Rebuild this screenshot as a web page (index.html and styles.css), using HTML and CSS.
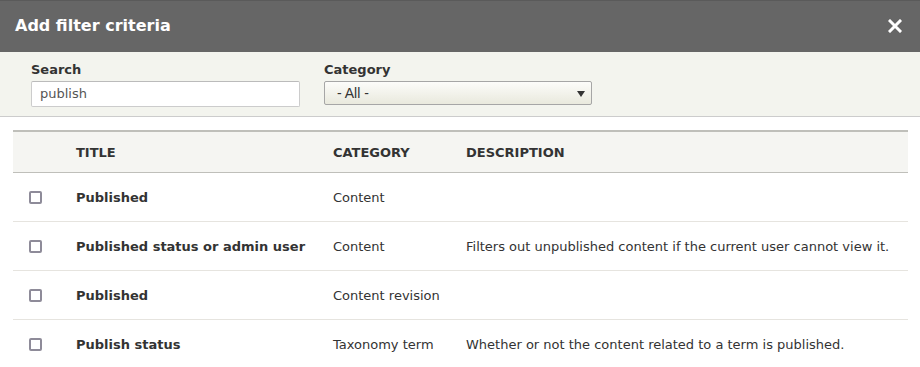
FILE: index.html
```html
<!DOCTYPE html>
<html lang="en">
<head>
<meta charset="utf-8">
<title>Add filter criteria</title>
<link rel="stylesheet" href="styles.css">
</head>
<body>
<div class="dialog">
  <div class="titlebar">
    <span class="title">Add filter criteria</span>
    <button class="close" aria-label="Close">
      <svg width="14" height="14" viewBox="0 0 14 14"><path d="M2 2 L12 12 M12 2 L2 12" stroke="#fff" stroke-width="3" stroke-linecap="square"/></svg>
    </button>
  </div>
  <div class="filters">
    <div class="field search">
      <label class="label">Search</label>
      <div class="input">publish</div>
    </div>
    <div class="field category">
      <label class="label">Category</label>
      <div class="select"><span>- All -</span><span class="arrow"></span></div>
    </div>
  </div>
  <div class="content">
    <table class="grid">
      <colgroup><col class="c-check"><col class="c-title"><col class="c-cat"><col></colgroup>
      <thead>
        <tr><th></th><th>Title</th><th>Category</th><th>Description</th></tr>
      </thead>
      <tbody>
        <tr><td class="chk"><span class="box"></span></td><td class="name">Published</td><td>Content</td><td></td></tr>
        <tr><td class="chk"><span class="box"></span></td><td class="name">Published status or admin user</td><td>Content</td><td>Filters out unpublished content if the current user cannot view it.</td></tr>
        <tr><td class="chk"><span class="box"></span></td><td class="name">Published</td><td>Content revision</td><td></td></tr>
        <tr><td class="chk"><span class="box"></span></td><td class="name">Publish status</td><td>Taxonomy term</td><td>Whether or not the content related to a term is published.</td></tr>
      </tbody>
    </table>
  </div>
</div>
</body>
</html>
```
FILE: styles.css
```css
html, body {
  margin: 0;
  padding: 0;
  background: #fff;
}
body {
  font-family: "DejaVu Sans", "Liberation Sans", sans-serif;
  font-size: 13px;
  color: #333;
}
.dialog {
  width: 920px;
  height: 367px;
  overflow: hidden;
  background: #fff;
}
.titlebar {
  height: 51px;
  background: #666;
  border-top: 1px solid #5a5a5a;
  display: flex;
  align-items: center;
  justify-content: space-between;
  padding: 0 18px 0 15px;
}
.title {
  color: #fff;
  font-weight: bold;
  font-size: 16px;
  margin-top: -2px;
}
.close {
  border: 0;
  background: none;
  padding: 0;
  width: 14px;
  height: 14px;
  display: flex;
  margin-top: -1px;
}
.filters {
  background: #f3f4ee;
  border-bottom: 1px solid #ccc;
  height: 65px;
  display: flex;
  gap: 24px;
  padding-left: 31px;
  box-sizing: border-box;
  padding-top: 9px;
}
.field {
  display: flex;
  flex-direction: column;
}
.label {
  font-weight: bold;
  line-height: 18px;
  margin-bottom: 2px;
}
.input {
  width: 269px;
  height: 26px;
  box-sizing: border-box;
  border: 1px solid #ccc;
  border-top-color: #bbb;
  border-radius: 2px;
  background: #fff;
  padding: 0 8px;
  line-height: 24px;
  color: #555;
}
.select {
  width: 268px;
  height: 24px;
  box-sizing: border-box;
  border: 1px solid #a6a6a6;
  border-radius: 2px;
  background: linear-gradient(#fcfcfa, #e9e9dd);
  display: flex;
  align-items: center;
  justify-content: space-between;
  padding: 0 6px 0 12px;
  font-family: "Liberation Sans", Arial, sans-serif;
  font-size: 14px;
  color: #333;
}
.arrow {
  width: 0;
  height: 0;
  border-left: 4px solid transparent;
  border-right: 4px solid transparent;
  border-top: 6px solid #333;
  margin-top: 2px;
}
.content {
  padding: 13px 12px 0 13px;
}
.grid {
  width: 895px;
  border-collapse: collapse;
  table-layout: fixed;
}
.c-check { width: 63px; }
.c-title { width: 257px; }
.c-cat { width: 133px; }
.grid thead th {
  background: #f5f5f2;
  border-top: 2px solid #bfbfba;
  border-bottom: 1px solid #bfbfba;
  height: 40px;
  padding: 0;
  text-align: left;
  text-transform: uppercase;
  font-weight: bold;
  font-size: 13px;
  color: #333;
}
.grid tbody td {
  height: 48px;
  padding: 0;
  border-bottom: 1px solid #e6e4df;
  vertical-align: middle;
}
.grid tbody td.chk {
  padding-left: 16px;
}
.name {
  font-weight: bold;
}
.box {
  display: block;
  width: 13px;
  height: 13px;
  box-sizing: border-box;
  border: 2px solid #8e8b99;
  border-radius: 2px;
  background: #fff;
  margin-top: 1px;
}
```
